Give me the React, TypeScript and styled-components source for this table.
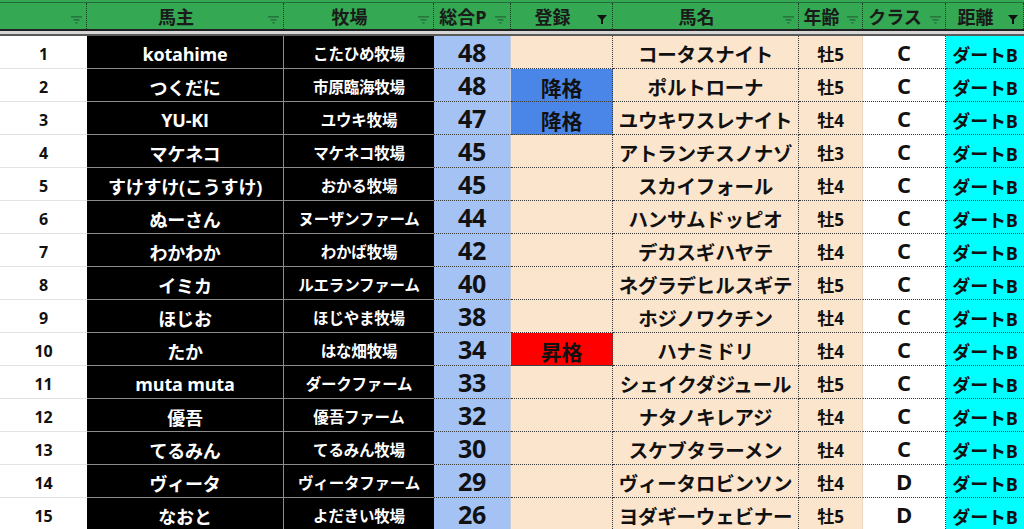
import React, { FC } from 'react';
import styled, { createGlobalStyle, css } from 'styled-components';

const GlobalStyle = createGlobalStyle`
  html, body {
    margin: 0;
    padding: 0;
    background: #ffffff;
  }
  body {
    font-family: 'Open Sans', 'Noto Sans CJK JP', sans-serif;
    overflow: hidden;
  }
`;

const COLUMNS = '87px 197px 150px 77px 102px 186px 64px 83px 78px';

const colors = {
  green: '#34a853',
  peach: '#fce5cd',
  lightBlue: '#a4c2f4',
  blue: '#4a86e8',
  red: '#ff0000',
  cyan: '#00ffff',
  black: '#000000',
  text: '#111111',
};

const Sheet = styled.div`
  width: 1024px;
  height: 529px;
  overflow: hidden;
`;

const Header = styled.div`
  background: ${colors.green};
  padding-top: 2px;
`;

const HeaderRow = styled.div`
  display: grid;
  grid-template-columns: ${COLUMNS};
  height: 26px;
  border-top: 1px solid #256b39;
`;

const HeaderCell = styled.div`
  display: flex;
  align-items: center;
  border-right: 1px dotted #1b3a24;
  font-size: 18px;
  font-weight: 700;
  color: #1a1a1a;
  min-width: 0;
`;

const HeaderLabel = styled.span`
  flex: 1;
  text-align: center;
  white-space: nowrap;
  padding-left: 2px;
`;

const FilterWrap = styled.span`
  display: flex;
  width: 20px;
  justify-content: center;
  padding-top: 7px;
  flex-shrink: 0;
`;

const FreezeBar = styled.div`
  height: 3px;
  background: #d6d6d6;
  border-top: 2px solid #222222;
  border-bottom: 2px solid #5a5a5a;
`;

const Row = styled.div`
  display: grid;
  grid-template-columns: ${COLUMNS};
  height: 33px;
`;

type Kind = 'num' | 'owner' | 'ranch' | 'points' | 'reg' | 'horse' | 'age' | 'cls' | 'dist';

const dotted = '1px dotted #3a3a3a';

const kinds: Record<Kind, ReturnType<typeof css>> = {
  num: css`
    background: #ffffff;
    font-size: 16px;
    border-bottom: 1px solid #e3e3e3;
  `,
  owner: css`
    background: ${colors.black};
    color: #ffffff;
    font-size: 18px;
    border-right: 1px solid #8c8c8c;
    border-bottom: 1px solid #8c8c8c;
  `,
  ranch: css`
    background: ${colors.black};
    color: #ffffff;
    font-size: 15.5px;
    border-bottom: 1px solid #8c8c8c;
  `,
  points: css`
    background: ${colors.lightBlue};
    font-size: 25px;
    padding-top: 0;
    padding-bottom: 1px;
    border-right: 1px solid #c4cedd;
    border-bottom: ${dotted};
  `,
  reg: css`
    font-size: 21px;
    border-right: ${dotted};
    border-bottom: ${dotted};
  `,
  horse: css`
    background: ${colors.peach};
    font-size: 19.5px;
    border-right: ${dotted};
    border-bottom: ${dotted};
  `,
  age: css`
    background: ${colors.peach};
    font-size: 17px;
    border-right: 1px solid #e9d6c2;
    border-bottom: ${dotted};
  `,
  cls: css`
    background: #ffffff;
    font-size: 22px;
    padding-top: 0;
    padding-bottom: 1px;
    border-right: ${dotted};
    border-bottom: ${dotted};
  `,
  dist: css`
    background: ${colors.cyan};
    font-size: 18px;
    border-bottom: ${dotted};
  `,
};

const Cell = styled.div<{ $kind: Kind; $bg?: string }>`
  display: flex;
  align-items: center;
  justify-content: center;
  padding-top: 3px;
  box-sizing: border-box;
  font-weight: 700;
  color: ${colors.text};
  white-space: nowrap;
  overflow: hidden;
  letter-spacing: -0.2px;
  ${(p) => kinds[p.$kind]}
  ${(p) => p.$bg && `background: ${p.$bg};`}
`;

const FilterIcon: FC<{ active?: boolean }> = ({ active }) =>
  active ? (
    <svg width="10" height="9" viewBox="0 0 10 9">
      <path d="M0 0 H10 L6 4.5 V9 H4 V4.5 Z" fill="#111" />
    </svg>
  ) : (
    <svg width="11" height="8" viewBox="0 0 11 8">
      <rect x="0" y="0" width="11" height="1.6" fill="rgba(20,60,35,0.45)" />
      <rect x="2.5" y="3" width="6" height="1.6" fill="rgba(20,60,35,0.45)" />
      <rect x="4.5" y="6" width="2" height="1.6" fill="rgba(20,60,35,0.45)" />
    </svg>
  );

interface Column {
  label: string;
  active?: boolean;
}

const columns: Column[] = [
  { label: '' },
  { label: '馬主' },
  { label: '牧場' },
  { label: '総合P' },
  { label: '登録', active: true },
  { label: '馬名' },
  { label: '年齢' },
  { label: 'クラス' },
  { label: '距離', active: true },
];

interface Entry {
  owner: string;
  ranch: string;
  points: number;
  reg?: '降格' | '昇格';
  horse: string;
  age: string;
  cls: string;
  dist: string;
}

const entries: Entry[] = [
  { owner: 'kotahime', ranch: 'こたひめ牧場', points: 48, horse: 'コータスナイト', age: '牡5', cls: 'C', dist: 'ダートB' },
  { owner: 'つくだに', ranch: '市原臨海牧場', points: 48, reg: '降格', horse: 'ポルトローナ', age: '牡5', cls: 'C', dist: 'ダートB' },
  { owner: 'YU-KI', ranch: 'ユウキ牧場', points: 47, reg: '降格', horse: 'ユウキワスレナイト', age: '牡4', cls: 'C', dist: 'ダートB' },
  { owner: 'マケネコ', ranch: 'マケネコ牧場', points: 45, horse: 'アトランチスノナゾ', age: '牡3', cls: 'C', dist: 'ダートB' },
  { owner: 'すけすけ(こうすけ)', ranch: 'おかる牧場', points: 45, horse: 'スカイフォール', age: '牡4', cls: 'C', dist: 'ダートB' },
  { owner: 'ぬーさん', ranch: 'ヌーザンファーム', points: 44, horse: 'ハンサムドッピオ', age: '牡5', cls: 'C', dist: 'ダートB' },
  { owner: 'わかわか', ranch: 'わかば牧場', points: 42, horse: 'デカスギハヤテ', age: '牡4', cls: 'C', dist: 'ダートB' },
  { owner: 'イミカ', ranch: 'ルエランファーム', points: 40, horse: 'ネグラデヒルスギテ', age: '牡5', cls: 'C', dist: 'ダートB' },
  { owner: 'ほじお', ranch: 'ほじやま牧場', points: 38, horse: 'ホジノワクチン', age: '牡4', cls: 'C', dist: 'ダートB' },
  { owner: 'たか', ranch: 'はな畑牧場', points: 34, reg: '昇格', horse: 'ハナミドリ', age: '牡4', cls: 'C', dist: 'ダートB' },
  { owner: 'muta muta', ranch: 'ダークファーム', points: 33, horse: 'シェイクダジュール', age: '牡5', cls: 'C', dist: 'ダートB' },
  { owner: '優吾', ranch: '優吾ファーム', points: 32, horse: 'ナタノキレアジ', age: '牡4', cls: 'C', dist: 'ダートB' },
  { owner: 'てるみん', ranch: 'てるみん牧場', points: 30, horse: 'スケブタラーメン', age: '牡4', cls: 'C', dist: 'ダートB' },
  { owner: 'ヴィータ', ranch: 'ヴィータファーム', points: 29, horse: 'ヴィータロビンソン', age: '牡4', cls: 'D', dist: 'ダートB' },
  { owner: 'なおと', ranch: 'よだきい牧場', points: 26, horse: 'ヨダギーウェビナー', age: '牡5', cls: 'D', dist: 'ダートB' },
];

const regColor = (reg?: string) => {
  if (reg === '降格') return colors.blue;
  if (reg === '昇格') return colors.red;
  return colors.peach;
};

export default function App() {
  return (
    <Sheet>
      <GlobalStyle />
      <Header>
        <HeaderRow>
          {columns.map((col, i) => (
            <HeaderCell key={i}>
              <HeaderLabel>{col.label}</HeaderLabel>
              <FilterWrap>
                <FilterIcon active={col.active} />
              </FilterWrap>
            </HeaderCell>
          ))}
        </HeaderRow>
      </Header>
      <FreezeBar />
      {entries.map((e, i) => (
        <Row key={i}>
          <Cell $kind="num">{i + 1}</Cell>
          <Cell $kind="owner">{e.owner}</Cell>
          <Cell $kind="ranch">{e.ranch}</Cell>
          <Cell $kind="points">{e.points}</Cell>
          <Cell $kind="reg" $bg={regColor(e.reg)}>
            {e.reg ?? ''}
          </Cell>
          <Cell $kind="horse">{e.horse}</Cell>
          <Cell $kind="age">{e.age}</Cell>
          <Cell $kind="cls">{e.cls}</Cell>
          <Cell $kind="dist">{e.dist}</Cell>
        </Row>
      ))}
    </Sheet>
  );
}
